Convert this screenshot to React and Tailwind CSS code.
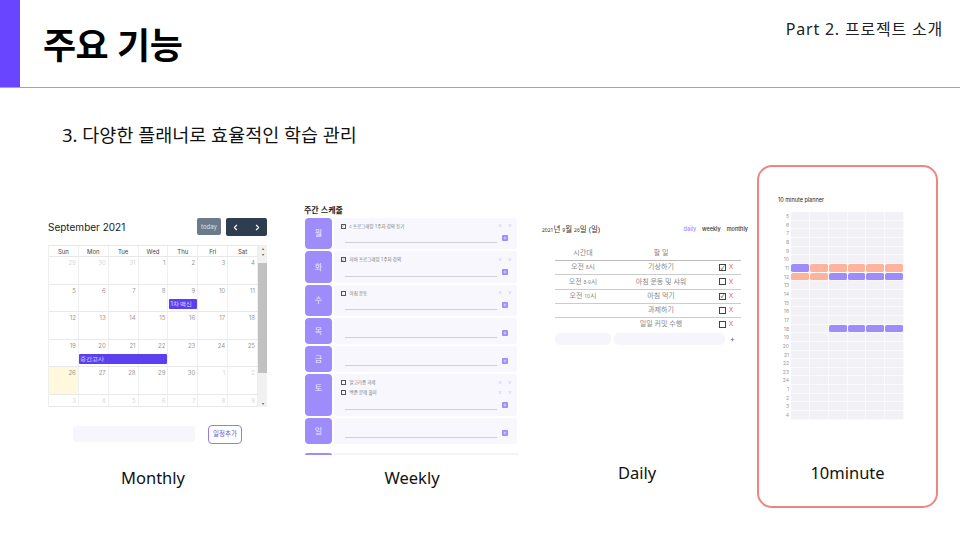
import React from "react";
import { ChevronLeft, ChevronRight, Plus } from "lucide-react";

const FONT = { fontFamily: '"Noto Sans","Noto Sans CJK KR",sans-serif' };

const weeks = [
  { h: "h-[27.5px]", days: [[29, 1], [30, 1], [31, 1], [1], [2], [3], [4]] },
  { h: "h-[27.5px]", days: [[5], [6], [7], [8], [9], [10], [11]] },
  { h: "h-[27.5px]", days: [[12], [13], [14], [15], [16], [17], [18]] },
  { h: "h-[27.5px]", days: [[19], [20], [21], [22], [23], [24], [25]] },
  { h: "h-[27.5px]", days: [[26], [27], [28], [29], [30], [1, 1], [2, 1]] },
  { h: "h-[12px]", days: [[3, 1], [4, 1], [5, 1], [6, 1], [7, 1], [8, 1], [9, 1]] },
];

function Calendar() {
  return (
    <div className="w-[219px]">
      <div className="flex items-center justify-between h-[18px] mb-[9px]">
        <span className="text-[10px] text-[#222]" style={{ fontFamily: "Inter, sans-serif" }}>September 2021</span>
        <div className="flex gap-[5px]">
          <div className="w-[24px] h-[17px] rounded-[2px] bg-[#6c7b8b] text-[#dfe3e8] text-[6px] flex items-center justify-center" style={{ fontFamily: "Inter, sans-serif" }}>today</div>
          <div className="w-[41px] h-[18px] rounded-[2px] bg-[#2c3e50] text-white flex items-center justify-between px-[5px]">
            <ChevronLeft size={9} strokeWidth={3} />
            <ChevronRight size={9} strokeWidth={3} />
          </div>
        </div>
      </div>
      <div className="flex" style={{ fontFamily: "Inter, sans-serif" }}>
        <div className="w-[210px] border-l border-[#eee]">
          <div className="grid grid-cols-7 h-[12px] border-y border-[#e8e8e8] text-[6px] text-[#444]">
            {["Sun", "Mon", "Tue", "Wed", "Thu", "Fri", "Sat"].map((d) => (
              <div key={d} className="flex items-center justify-center border-r border-[#eee]">{d}</div>
            ))}
          </div>
          {weeks.map((w, i) => (
            <div key={i} className={`grid grid-cols-7 border-b border-[#e9e9e9] ${w.h}`}>
              {w.days.map((d, j) => (
                <div key={j} className={`border-r border-[#efefef] text-[6px] text-right pr-[2px] pt-[2px] leading-[8px] ${d[1] ? "text-[#d8d8d8]" : "text-[#999]"} ${i === 4 && j === 0 ? "bg-[#fff8dc]" : ""}`}>
                  {d[0]}
                  {i === 1 && j === 4 && (
                    <div className="relative mt-[4px] h-[10px] w-[28px] ml-px rounded-[1px] bg-[#5b3ff0] text-[#e6e0ff] text-left text-[5.5px] leading-[10px] pl-px">1차 백신</div>
                  )}
                  {i === 3 && j === 1 && (
                    <div className="relative mt-[4px] h-[10px] w-[88px] rounded-[1px] bg-[#5b3ff0] text-[#e6e0ff] text-left text-[5.5px] leading-[10px] pl-px">중간고사</div>
                  )}
                </div>
              ))}
            </div>
          ))}
        </div>
        <div className="w-[9px] bg-[#f1f1f1] flex flex-col items-center text-[#555]">
          <div className="h-[18px] text-[4px] leading-[6px] pt-[1px] text-center">▴<br />▾</div>
          <div className="w-full h-[110px] bg-[#c1c1c1]" />
          <div className="flex-1 flex items-end text-[4px] leading-[6px]">▾</div>
        </div>
      </div>
      <div className="flex items-center mt-[18px] ml-[25px]">
        <div className="w-[122px] h-[16px] rounded-[3px] bg-[#f6f6fc]" />
        <div className="ml-[13px] w-[34px] h-[19px] rounded-[4px] border border-[#8f7cf0] text-[#6a55d8] text-[6.5px] flex items-center justify-center">일정추가</div>
      </div>
    </div>
  );
}

const schedule = [
  { d: "월", h: "h-[31.5px]", items: [["c 프로그래밍 1주차 강의 듣기", 1]] },
  { d: "화", h: "h-[31.5px]", items: [["자바 프로그래밍 1주차 강의", 1]] },
  { d: "수", h: "h-[31.5px]", items: [["아침 운동", 0]] },
  { d: "목", h: "h-[26px]", items: [] },
  { d: "금", h: "h-[26px]", items: [] },
  { d: "토", h: "h-[42px]", items: [["알고리즘 과제", 0], ["백준 문제 풀이", 0]], top: true },
  { d: "일", h: "h-[26px]", items: [] },
];

function Weekly() {
  return (
    <div className="w-[215px]">
      <div className="text-[8px] leading-[10px] font-bold text-[#222] h-[12.5px]">주간 스케줄</div>
      <div className="flex flex-col gap-[2px]">
        {schedule.map((r) => (
          <div key={r.d} className={`flex gap-[1.5px] pl-px ${r.h}`}>
            <div className={`w-[27px] rounded-[4px] bg-[#9f8cfb] text-[#efeaff] text-[8px] flex justify-center ${r.top ? "items-start pt-[8px]" : "items-center"}`}>{r.d}</div>
            <div className="flex-1 mr-[2px] rounded-[3px] bg-[#f7f7fd] pl-[7px] pr-[6px] flex flex-col justify-end pb-[6px]">
              {r.items.length > 0 && (
                <div className="flex-1 flex flex-col gap-[3px] pt-[5px]">
                  {r.items.map(([t, c]) => (
                    <div key={t} className="flex items-center h-[7px] text-[4.5px] text-[#777]">
                      <span className="w-[5px] h-[5px] border border-[#555] mr-[4px] flex items-center justify-center text-[4px] leading-none">{c ? "✓" : ""}</span>
                      <span className="flex-1">{t}</span>
                      <span className="text-[#c9c4ee] text-[5px] mr-[7px]">x</span>
                      <span className="text-[#c9c4ee] text-[5px]">v</span>
                    </div>
                  ))}
                </div>
              )}
              <div className="flex items-end">
                <div className="ml-[4px] w-[152px] border-b border-[#cfcfd6]" />
                <div className="ml-[5px] w-[6px] h-[6px] bg-[#9f8cfb] rounded-[1px] mb-[2px] flex items-center justify-center text-white">
                  <Plus size={4} strokeWidth={3} />
                </div>
              </div>
            </div>
          </div>
        ))}
      </div>
      <div className="mt-[8.5px] ml-[1px] h-[2px] flex gap-[1.5px]">
        <div className="w-[27px] bg-[#9f8cfb] rounded-t-[2px]" />
        <div className="flex-1 bg-[#f3f3f8]" />
      </div>
    </div>
  );
}

function D({ children }) {
  return <span className="text-[5px]">{children}</span>;
}

const daily = [
  [<>오전 <D>8</D>시</>, "기상하기", 1],
  [<>오전 <D>8-9</D>시</>, "아침 운동 및 샤워", 0],
  [<>오전 <D>10</D>시</>, "아침 먹기", 1],
  ["", "과제하기", 0],
  ["", "일일 커밋 수행", 0],
];

function Daily() {
  return (
    <div className="w-[207px]">
      <div className="flex items-center justify-between h-[9px]">
        <span className="ml-px text-[7.5px] text-[#333]"><D>2021</D>년 <D>9</D>월 <D>26</D>일 (일)</span>
        <span className="flex gap-[6px] font-medium text-[5.5px] text-[#333]" style={{ fontFamily: "Inter, sans-serif" }}>
          <span className="text-[#9f8cfb]">daily</span><span>weekly</span><span>monthly</span>
        </span>
      </div>
      <div className="ml-[14px] w-[186px] mt-[13px] text-[7px] text-[#888]">
        <div className="flex h-[14px] items-center border-b border-[#bbb]">
          <span className="w-[56px] text-center">시간대</span>
          <span className="w-[100px] text-center">할 일</span>
        </div>
        {daily.map(([a, b, c], i) => (
          <div key={i} className="flex h-[14.25px] items-center border-b border-[#ccc] last:border-transparent">
            <span className="w-[56px] text-center">{a}</span>
            <span className="w-[100px] text-center">{b}</span>
            <span className="ml-[8px] w-[7px] h-[7px] border border-[#444] flex items-center justify-center text-[6px] leading-none text-[#333]">{c ? "✓" : ""}</span>
            <span className="ml-[3px] text-[#e8584f] text-[7px]">X</span>
          </div>
        ))}
      </div>
      <div className="ml-[14px] mt-[1px] flex items-center">
        <div className="w-[56px] h-[12px] rounded-[5px] bg-[#f5f5fb]" />
        <div className="ml-[3px] w-[111px] h-[12px] rounded-[5px] bg-[#f5f5fb]" />
        <Plus size={5} strokeWidth={3} className="ml-[5px] text-[#6a55d8]" />
      </div>
    </div>
  );
}

const hours = [5, 6, 7, 8, 9, 10, 11, 12, 13, 14, 15, 16, 17, 18, 19, 20, 21, 22, 23, 24, 1, 2, 3, 4];
const painted = {
  6: ["p", "s", "s", "s", "s", "s"],
  7: ["s", "s", "p", "p", "p", "p"],
  13: ["", "", "p", "p", "p", "p"],
};
const cellColor = { p: "bg-[#9f8cfb] rounded-[2px]", s: "bg-[#fdb39c] rounded-[2px]", "": "bg-[#f2f2f6]" };

function Planner() {
  return (
    <div className="w-[181px] h-[343px] rounded-[15px] border-2 border-[#ee8585] pl-[19px] pt-[29px] shrink-0">
      <div className="text-[5.5px] leading-[8px] text-[#222]" style={{ fontFamily: "Inter, sans-serif" }}>10 minute planner</div>
      <div className="mt-[8px] flex flex-col" style={{ fontFamily: "Inter, sans-serif" }}>
        {hours.map((h, i) => (
          <div key={i} className="flex h-[8.67px] items-stretch">
            <span className="w-[11px] text-right text-[5px] leading-[8.67px] text-[#999] mr-[2px]">{h}</span>
            <div className="grid grid-cols-6 w-[113px]">
              {(painted[i] || ["", "", "", "", "", ""]).map((c, j) => (
                <div key={j} className={`border-r border-b border-[#fafafc] ${cellColor[c]}`} />
              ))}
            </div>
          </div>
        ))}
      </div>
      <div className="mt-[41px] text-[16.5px] leading-[24px] text-[#111] text-center -ml-[19px]">10minute</div>
    </div>
  );
}

function Caption({ children, className }) {
  return <div className={`text-[16.5px] leading-[24px] text-[#111] text-center ${className}`}>{children}</div>;
}

export default function App() {
  return (
    <div className="w-[960px] h-[540px] bg-white overflow-hidden" style={FONT}>
      <header className="flex h-[88px] border-b border-[#a6a6a6]">
        <div className="w-[20px] bg-[#6a45ff]" />
        <h1 className="ml-[23px] mt-[21px] text-[36px] leading-[50px] font-bold tracking-[-0.5px] text-black">주요 기능</h1>
        <div className="ml-auto mr-[17px] mt-[18px] text-[16px] leading-[22px] tracking-[0.8px] text-[#222]">Part 2. 프로젝트 소개</div>
      </header>
      <div className="ml-[62px] mt-[33px] text-[18.5px] leading-[28px] text-[#111]">3. 다양한 플래너로 효율적인 학습 관리</div>
      <section className="flex items-start pl-[48px] mt-[16px]">
        <div className="mt-[53px]">
          <Calendar />
          <Caption className="mt-[22px] w-[210px]">Monthly</Caption>
        </div>
        <div className="ml-[37px] mt-[40px]">
          <Weekly />
          <Caption className="mt-[11px] ml-[1px]">Weekly</Caption>
        </div>
        <div className="ml-[22px] mt-[60px]">
          <Daily />
          <Caption className="mt-[116px] -ml-[15px]">Daily</Caption>
        </div>
        <div className="ml-[9px]">
          <Planner />
        </div>
      </section>
    </div>
  );
}
